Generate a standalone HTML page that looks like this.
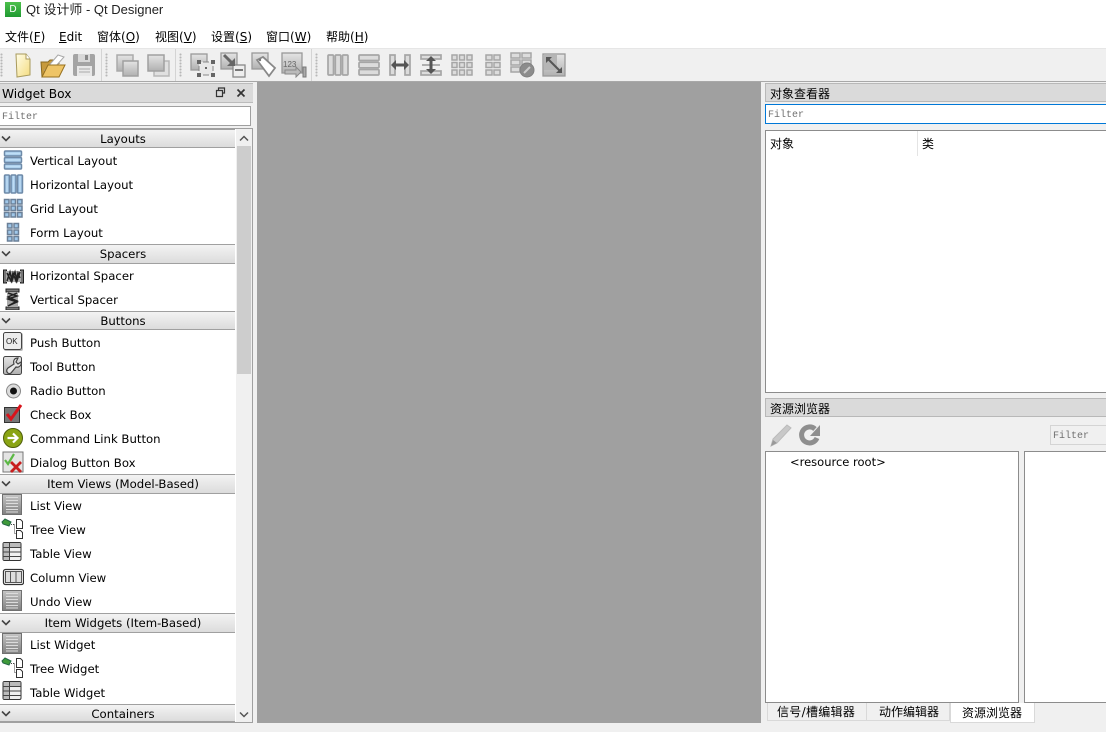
<!DOCTYPE html>
<html><head><meta charset="utf-8"><style>
html,body{margin:0;padding:0}
body{width:1106px;height:732px;overflow:hidden;position:relative;background:#f0f0f0;font-family:"DejaVu Sans","Noto Sans CJK SC",sans-serif;font-size:12px;color:#000}
.a{position:absolute}
.t{position:absolute;white-space:nowrap;line-height:16px}
.m{top:29px}
.hd{position:absolute;left:0;width:235px;background:linear-gradient(#f3f3f3,#dcdcdc);border-top:1px solid #a0a0a0;border-bottom:1px solid #a0a0a0;box-sizing:border-box;font-size:11.700px}
.hd span{position:absolute;left:0;width:246px;text-align:center;top:1px;line-height:17px;white-space:nowrap}
.hd svg{position:absolute;left:1px;top:5px}
.it{position:absolute;left:30px;white-space:nowrap;line-height:16px;font-size:11.700px}
.ic{position:absolute;left:2px;width:22px;height:22px}
.tb{position:absolute;top:52px;width:26px;height:26px}
.grip{position:absolute;top:53px;width:3px;height:24px;background-image:radial-gradient(#b8b8b8 45%,transparent 55%);background-size:3px 3px}
.sep{position:absolute;top:49px;width:1px;height:32px;background:#d4d4d4}
.mono{font-family:"Liberation Mono",monospace;font-size:10px;color:#707070}
</style></head><body>
<svg width="0" height="0" style="position:absolute"><defs>
<linearGradient id="bl" x1="0" y1="0" x2="1" y2="0"><stop offset="0" stop-color="#7ea6d0"/><stop offset=".5" stop-color="#c4e2f8"/><stop offset="1" stop-color="#7ea6d0"/></linearGradient>
<linearGradient id="bv" x1="0" y1="0" x2="0" y2="1"><stop offset="0" stop-color="#8fb9e0"/><stop offset=".5" stop-color="#c4e2f8"/><stop offset="1" stop-color="#8fb9e0"/></linearGradient>
<linearGradient id="gy" x1="0" y1="0" x2="0" y2="1"><stop offset="0" stop-color="#e4e4e4"/><stop offset="1" stop-color="#b0b0b0"/></linearGradient>
<linearGradient id="ls" x1="0" y1="0" x2="0" y2="1"><stop offset="0" stop-color="#c4c4c4"/><stop offset="1" stop-color="#808080"/></linearGradient>
<linearGradient id="doc" x1="0" y1="0" x2="1" y2="1"><stop offset="0" stop-color="#fffde8"/><stop offset="1" stop-color="#f4dc80"/></linearGradient>
<symbol id="chev" viewBox="0 0 10 8"><path d="M1 1.500L5 5.500L9 1.500" fill="none" stroke="#444" stroke-width="1.600"/></symbol>
<symbol id="lv" viewBox="0 0 22 22"><rect x="1.500" y=".5" width="19" height="20" fill="url(#ls)" stroke="#707070"/><path d="M5 3.500h12M5 6.500h12M5 9.500h12M5 12.500h12M5 15.500h12M5 18h12" stroke="#dcdcdc"/></symbol>
<symbol id="tv" viewBox="0 0 22 22"><path d="M1 4l3-3 6 3-2 4-6-2z" fill="#3f9a3a" stroke="#264"/><path d="M10 6.500h4M13.500 6.500v9h2" stroke="#444" stroke-dasharray="1 1" fill="none"/><path d="M15.500 1.500h4l2 2v7h-6zM15.500 12.500h4l2 2v6h-6z" fill="#fff" stroke="#333"/></symbol>
<symbol id="tbl" viewBox="0 0 22 22"><rect x="3" y="1.500" width="18" height="18" rx="1.500" fill="#f0f0f0" stroke="#333"/><rect x="3.500" y="2" width="6" height="17" fill="#bbb"/><rect x="3.500" y="2" width="17" height="4" fill="#bbb"/><path d="M3 6.500h18M3 11h18M3 15.500h18M9.500 1.500v18" stroke="#444"/></symbol>
<symbol id="gbtn" viewBox="0 0 26 26"><rect x="3" y="3" width="16" height="16" fill="url(#gy)" stroke="#aaa" stroke-width="1.500"/><rect x="9" y="9" width="15" height="15" fill="url(#gy)" stroke="#a0a0a0" stroke-width="1.500"/></symbol>
<symbol id="gbtn2" viewBox="0 0 26 26"><rect x="9" y="9" width="15" height="15" fill="#e0e0e0" stroke="#b8b8b8" stroke-width="1.500"/><rect x="3" y="3" width="16" height="16" fill="url(#gy)" stroke="#a0a0a0" stroke-width="1.500"/></symbol>
</defs></svg>

<!-- title + menu -->
<div class="a" style="left:0;top:0;width:1106px;height:48px;background:#fff"></div>
<div class="a" style="left:5px;top:2px;width:16px;height:15px;background:linear-gradient(#4cc04c,#1f9a32);color:#fff;font-size:10px;line-height:15px;text-align:center;font-family:'Liberation Sans',sans-serif">D</div>
<div class="t" style="left:26px;top:2px;font-family:'Liberation Sans','Noto Sans CJK SC',sans-serif;font-size:13px;color:#222">Qt 设计师 - Qt Designer</div>
<div class="t m" style="left:5px">文件(<u>F</u>)</div>
<div class="t m" style="left:59px"><u>E</u>dit</div>
<div class="t m" style="left:97px">窗体(<u>O</u>)</div>
<div class="t m" style="left:155px">视图(<u>V</u>)</div>
<div class="t m" style="left:211px">设置(<u>S</u>)</div>
<div class="t m" style="left:266px">窗口(<u>W</u>)</div>
<div class="t m" style="left:326px">帮助(<u>H</u>)</div>

<!-- toolbar -->
<div class="a" style="left:0;top:48px;width:1106px;height:1px;background:#e6e6e6"></div>
<div class="a" style="left:0;top:81px;width:1106px;height:1px;background:#a8a8a8"></div>
<div class="grip" style="left:0"></div><div class="sep" style="left:101px"></div>
<div class="grip" style="left:105px"></div><div class="sep" style="left:175px"></div>
<div class="grip" style="left:179px"></div><div class="sep" style="left:311px"></div>
<div class="grip" style="left:315px"></div>

<svg class="tb" style="left:10px" viewBox="0 0 26 26"><path d="M6 2h10l4 5v16l-13 2z" fill="url(#doc)" stroke="#a89a5c"/><path d="M16 2v5h4" fill="#fff" stroke="#a89a5c"/></svg>
<svg class="tb" style="left:40px" viewBox="0 0 26 26"><path d="M2 25L1 10h7l2-2h9v4" fill="#c79a3c" stroke="#8a6a20"/><path d="M5 18L18 3l6 2-9 10z" fill="#fff" stroke="#aaa"/><path d="M2 25l6-12h17l-6 12z" fill="#eec466" stroke="#96701f"/></svg>
<svg class="tb" style="left:71px" viewBox="0 0 26 26"><path d="M2 4q0-2 2-2h18q2 0 2 2v18q0 2-2 2H4q-2 0-2-2z" fill="#a4a4a4"/><rect x="7" y="2" width="12" height="8" fill="#d8d8d8"/><rect x="14" y="3" width="3" height="5" fill="#888"/><rect x="6" y="14" width="15" height="10" fill="#e8e8e8"/><path d="M8 17h11M8 20h11" stroke="#aaa"/></svg>

<svg class="tb" style="left:114px"><use href="#gbtn"/></svg>
<svg class="tb" style="left:145px"><use href="#gbtn2"/></svg>

<svg class="tb" style="left:190px" viewBox="0 0 26 26"><rect x="1" y="2" width="16" height="16" fill="url(#gy)" stroke="#999" stroke-width="1.300"/><rect x="9" y="10" width="14" height="13" fill="#e8e8e8"/><path d="M7 8h4v4H7zM21 8h4v4h-4zM7 21h4v4H7zM21 21h4v4h-4zM15 15h2v2h-2z" fill="#666"/><path d="M13 10h6M13 23h6M9 14v5M23 14v5" stroke="#888"/></svg>
<svg class="tb" style="left:220px" viewBox="0 0 26 26"><rect x="1" y="1" width="16" height="16" fill="url(#gy)" stroke="#999" stroke-width="1.300"/><rect x="13" y="13" width="12" height="12" fill="#eee" stroke="#888" stroke-width="1.300"/><path d="M15 18h8" stroke="#777" stroke-width="2"/><path d="M4 3l9 9" stroke="#666" stroke-width="3"/><path d="M15 6v8H7z" fill="#666"/></svg>
<svg class="tb" style="left:251px" viewBox="0 0 26 26"><rect x="1" y="1" width="16" height="16" fill="url(#gy)" stroke="#999" stroke-width="1.300"/><path d="M6 8l6-3 12 11-6 8z" fill="#fff" stroke="#888" stroke-width="1.800"/><circle cx="9" cy="8" r="1.200" fill="#777"/></svg>
<svg class="tb" style="left:281px" viewBox="0 0 26 26"><rect x="1" y="1" width="20" height="20" fill="url(#gy)" stroke="#999" stroke-width="1.300"/><text x="2" y="15" font-family="Liberation Sans" font-size="8" fill="#666">123</text><path d="M4 18h11v-3l5 5-5 5v-3H4z" fill="#bbb" stroke="#888"/><rect x="22" y="15" width="3" height="10" fill="#aaa" stroke="#777"/></svg>

<svg class="tb" style="left:325px" viewBox="0 0 26 26"><g fill="#dcdcdc" stroke="#a6a6a6" stroke-width="1.700"><rect x="3" y="3" width="5.500" height="20" rx="1"/><rect x="10.300" y="3" width="5.500" height="20" rx="1"/><rect x="17.500" y="3" width="5.500" height="20" rx="1"/></g></svg>
<svg class="tb" style="left:356px" viewBox="0 0 26 26"><g fill="#dcdcdc" stroke="#a6a6a6" stroke-width="1.700"><rect x="3" y="3" width="20" height="5.500" rx="1"/><rect x="3" y="10.300" width="20" height="5.500" rx="1"/><rect x="3" y="17.500" width="20" height="5.500" rx="1"/></g></svg>
<svg class="tb" style="left:387px" viewBox="0 0 26 26"><g fill="#dcdcdc" stroke="#a6a6a6" stroke-width="1.700"><rect x="3" y="3" width="5" height="20"/><rect x="18" y="3" width="5" height="20"/></g><path d="M6 13h14" stroke="#555" stroke-width="3"/><path d="M9 8l-5 5 5 5zM17 8l5 5-5 5z" fill="#555"/></svg>
<svg class="tb" style="left:418px" viewBox="0 0 26 26"><g fill="#dcdcdc" stroke="#a6a6a6" stroke-width="1.700"><rect x="3" y="3" width="20" height="4"/><rect x="3" y="19" width="20" height="4"/></g><path d="M4 13h18" stroke="#999" stroke-width="1.500"/><path d="M13 6v14" stroke="#555" stroke-width="3"/><path d="M8 9l5-5 5 5zM8 17l5 5 5-5z" fill="#555"/></svg>
<svg class="tb" style="left:449px" viewBox="0 0 26 26"><g fill="#dcdcdc" stroke="#a6a6a6" stroke-width="1.500"><rect x="3" y="3" width="5" height="5"/><rect x="10.500" y="3" width="5" height="5"/><rect x="18" y="3" width="5" height="5"/><rect x="3" y="10.500" width="5" height="5"/><rect x="10.500" y="10.500" width="5" height="5"/><rect x="18" y="10.500" width="5" height="5"/><rect x="3" y="18" width="5" height="5"/><rect x="10.500" y="18" width="5" height="5"/><rect x="18" y="18" width="5" height="5"/></g></svg>
<svg class="tb" style="left:480px" viewBox="0 0 26 26"><g fill="#dcdcdc" stroke="#a6a6a6" stroke-width="1.500"><rect x="6" y="3" width="6" height="5"/><rect x="14" y="3" width="6" height="5"/><rect x="6" y="10.500" width="6" height="5"/><rect x="14" y="10.500" width="6" height="5"/><rect x="6" y="18" width="6" height="5"/><rect x="14" y="18" width="6" height="5"/></g></svg>
<svg class="tb" style="left:510px" viewBox="0 0 26 26"><g fill="#dcdcdc" stroke="#a6a6a6" stroke-width="1.500"><rect x="1" y="1" width="9" height="5"/><rect x="12" y="1" width="9" height="5"/><rect x="1" y="8" width="9" height="5"/><rect x="12" y="8" width="9" height="5"/><rect x="1" y="15" width="9" height="5"/></g><circle cx="17" cy="18" r="7" fill="#8c8c8c" stroke="#808080"/><path d="M14 21l6-6" stroke="#ccc" stroke-width="2"/></svg>
<svg class="tb" style="left:541px" viewBox="0 0 26 26"><rect x="2" y="2" width="22" height="22" fill="url(#gy)" stroke="#999" stroke-width="1.300"/><path d="M3 3h13v15H3z" fill="#b5b5b5"/><path d="M6 6l14 14" stroke="#555" stroke-width="2"/><path d="M5 11V5h6zM21 15v6h-6z" fill="#555"/></svg>

<!-- widget box -->
<div class="a" style="left:0;top:83px;width:253px;height:20px;background:#dadada;border-top:1px solid #bbb;border-bottom:1px solid #bbb;box-sizing:border-box"></div>
<div class="t" style="left:2px;top:86px;font-size:12.200px">Widget Box</div>
<svg class="a" style="left:215px;top:87px" width="11" height="11" viewBox="0 0 11 11"><path d="M3.500 3V1h6v5H7.500M1.500 3.500h6v6h-6z" fill="none" stroke="#333" stroke-width="1.200"/></svg>
<svg class="a" style="left:236px;top:88px" width="10" height="10" viewBox="0 0 10 10"><path d="M1.500 1.500l7 7M8.500 1.500l-7 7" stroke="#333" stroke-width="1.700"/></svg>
<div class="a" style="left:-2px;top:106px;width:253px;height:20px;background:#fff;border:1px solid #a0a0a0;box-sizing:border-box"></div>
<div class="t mono" style="left:2px;top:110px">Filter</div>
<div class="a" style="left:0;top:128px;width:253px;height:595px;background:#fff;border-top:1px solid #a0a0a0;border-right:1px solid #a0a0a0;border-bottom:1px solid #a0a0a0;box-sizing:border-box"></div>
<div class="a" style="left:236px;top:129px;width:16px;height:593px;background:#f0f0f0"></div>
<div class="a" style="left:237px;top:146px;width:14px;height:228px;background:#cdcdcd"></div>
<svg class="a" style="left:239px;top:135px" width="10" height="7" viewBox="0 0 10 7"><path d="M1 5.500L5 1.500L9 5.500" fill="none" stroke="#555" stroke-width="1.500"/></svg>
<svg class="a" style="left:239px;top:711px" width="10" height="7" viewBox="0 0 10 7"><path d="M1 1.500L5 5.500L9 1.500" fill="none" stroke="#555" stroke-width="1.500"/></svg>

<div class="hd" style="top:129px;height:19px"><svg width="10" height="8"><use href="#chev"/></svg><span>Layouts</span></div>
<div class="hd" style="top:244px;height:20px"><svg width="10" height="8"><use href="#chev"/></svg><span>Spacers</span></div>
<div class="hd" style="top:311px;height:19px"><svg width="10" height="8"><use href="#chev"/></svg><span>Buttons</span></div>
<div class="hd" style="top:474px;height:20px"><svg width="10" height="8"><use href="#chev"/></svg><span>Item Views (Model-Based)</span></div>
<div class="hd" style="top:613px;height:20px"><svg width="10" height="8"><use href="#chev"/></svg><span>Item Widgets (Item-Based)</span></div>
<div class="hd" style="top:704px;height:18px"><svg width="10" height="8"><use href="#chev"/></svg><span>Containers</span></div>

<div class="it" style="top:153px">Vertical Layout</div>
<div class="it" style="top:177px">Horizontal Layout</div>
<div class="it" style="top:201px">Grid Layout</div>
<div class="it" style="top:225px">Form Layout</div>
<div class="it" style="top:268px">Horizontal Spacer</div>
<div class="it" style="top:292px">Vertical Spacer</div>
<div class="it" style="top:335px">Push Button</div>
<div class="it" style="top:359px">Tool Button</div>
<div class="it" style="top:383px">Radio Button</div>
<div class="it" style="top:407px">Check Box</div>
<div class="it" style="top:431px">Command Link Button</div>
<div class="it" style="top:455px">Dialog Button Box</div>
<div class="it" style="top:498px">List View</div>
<div class="it" style="top:522px">Tree View</div>
<div class="it" style="top:546px">Table View</div>
<div class="it" style="top:570px">Column View</div>
<div class="it" style="top:594px">Undo View</div>
<div class="it" style="top:637px">List Widget</div>
<div class="it" style="top:661px">Tree Widget</div>
<div class="it" style="top:685px">Table Widget</div>

<svg class="ic" style="top:149px" viewBox="0 0 22 22"><g fill="url(#bv)" stroke="#6e8aa8" stroke-width="1.500"><rect x="2.500" y="2" width="17" height="5" rx="1"/><rect x="2.500" y="8.500" width="17" height="5" rx="1"/><rect x="2.500" y="15" width="17" height="5" rx="1"/></g></svg>
<svg class="ic" style="top:173px" viewBox="0 0 22 22"><g fill="url(#bl)" stroke="#6e8aa8" stroke-width="1.500"><rect x="2.500" y="2" width="5" height="18" rx="1"/><rect x="9" y="2" width="5" height="18" rx="1"/><rect x="15.500" y="2" width="5" height="18" rx="1"/></g></svg>
<svg class="ic" style="top:197px" viewBox="0 0 22 22"><g fill="#a0c8ea" stroke="#6b8098" stroke-width="1.500"><rect x="2.500" y="2.500" width="4.500" height="4.500"/><rect x="9" y="2.500" width="4.500" height="4.500"/><rect x="15.500" y="2.500" width="4.500" height="4.500"/><rect x="2.500" y="9" width="4.500" height="4.500"/><rect x="9" y="9" width="4.500" height="4.500"/><rect x="15.500" y="9" width="4.500" height="4.500"/><rect x="2.500" y="15.500" width="4.500" height="4.500"/><rect x="9" y="15.500" width="4.500" height="4.500"/><rect x="15.500" y="15.500" width="4.500" height="4.500"/></g></svg>
<svg class="ic" style="top:221px" viewBox="0 0 22 22"><g fill="#a0c8ea" stroke="#6b8098" stroke-width="1.500"><rect x="5.500" y="2.500" width="4.500" height="4.500"/><rect x="12" y="2.500" width="4.500" height="4.500"/><rect x="5.500" y="9" width="4.500" height="4.500"/><rect x="12" y="9" width="4.500" height="4.500"/><rect x="5.500" y="15.500" width="4.500" height="4.500"/><rect x="12" y="15.500" width="4.500" height="4.500"/></g></svg>
<svg class="ic" style="top:265px" viewBox="0 0 22 22"><rect x="1.500" y="5" width="3" height="13" fill="#777" stroke="#222"/><rect x="18.500" y="5" width="3" height="13" fill="#777" stroke="#222"/><rect x="4" y="6" width="15" height="11" fill="#aaa"/><path d="M5 16l3-9 2 9 3-9 2 9 3-9M5 8l4 8 2-8 3 8 2-8 2 5" fill="none" stroke="#222" stroke-width="1.500"/></svg>
<svg class="ic" style="top:288px" viewBox="0 0 22 22"><rect x="4" y="1" width="13" height="3" fill="#777" stroke="#222"/><rect x="4" y="19" width="13" height="3" fill="#777" stroke="#222"/><rect x="5" y="4" width="11" height="15" fill="#aaa"/><path d="M6 5l9 3-9 3 9 3-9 4M15 5l-9 4 9 4-9 5" fill="none" stroke="#222" stroke-width="1.500"/></svg>
<svg class="ic" style="top:331px" viewBox="0 0 22 22"><rect x="2" y="2" width="19" height="18" rx="2" fill="#bbb"/><rect x="1.500" y="1.500" width="18" height="17" rx="2" fill="#ececec" stroke="#444"/><text x="4" y="13" font-family="Liberation Sans" font-size="8" fill="#222">OK</text></svg>
<svg class="ic" style="top:355px" viewBox="0 0 22 22"><rect x="1.500" y="1.500" width="18" height="18" rx="2" fill="url(#gy)" stroke="#444"/><path d="M16 3c-4 0-5 3-4 6l-6 4c-3 3 0 7 3 5l5-6c3 1 6-2 5-5l-3 2-2-2z" fill="#e8e8e8" stroke="#444" stroke-width="1.200"/></svg>
<svg class="ic" style="top:380px" viewBox="0 0 22 22"><circle cx="11.500" cy="11" r="7" fill="#dcdcdc" stroke="#888"/><circle cx="11.500" cy="11" r="3.500" fill="#111"/></svg>
<svg class="ic" style="top:403px" viewBox="0 0 22 22"><rect x="2.500" y="4.500" width="15" height="15" fill="#777" stroke="#333"/><path d="M5 11l4 5L19 2" fill="none" stroke="#d8141c" stroke-width="3"/></svg>
<svg class="ic" style="top:427px" viewBox="0 0 22 22"><circle cx="11" cy="11" r="9.500" fill="#8aa414" stroke="#4e5e0a"/><path d="M5.500 11h9M11 6.500l4.500 4.500-4.500 4.500" fill="none" stroke="#fff" stroke-width="2.200"/></svg>
<svg class="ic" style="top:451px" viewBox="0 0 22 22"><rect x="1" y="1" width="20" height="20" fill="#e4e4e4" stroke="#777"/><path d="M3 9l3 4 6-10" fill="none" stroke="#5cb845" stroke-width="2.200"/><path d="M9 11l10 10M19 11L9 21" stroke="#c81e1e" stroke-width="2.800"/></svg>
<svg class="ic" style="top:494px;left:1px"><use href="#lv"/></svg>
<svg class="ic" style="top:518px;left:1px"><use href="#tv"/></svg>
<svg class="ic" style="top:541px;left:0"><use href="#tbl"/></svg>
<svg class="ic" style="top:566px;left:2px" viewBox="0 0 22 22"><rect x="1.500" y="3.500" width="20" height="15" rx="2" fill="#fff" stroke="#333" stroke-width="1.300"/><rect x="3.500" y="5.500" width="16" height="11" fill="#ddd" stroke="#555"/><path d="M8.500 5.500v11M14 5.500v11" stroke="#555"/></svg>
<svg class="ic" style="top:590px;left:1px"><use href="#lv"/></svg>
<svg class="ic" style="top:633px;left:1px"><use href="#lv"/></svg>
<svg class="ic" style="top:657px;left:1px"><use href="#tv"/></svg>
<svg class="ic" style="top:680px;left:0"><use href="#tbl"/></svg>

<!-- central -->
<div class="a" style="left:257px;top:82px;width:504px;height:641px;background:#a0a0a0"></div>

<!-- object inspector -->
<div class="a" style="left:765px;top:83px;width:341px;height:19px;background:#dadada;border:1px solid #b8b8b8;border-right:0;box-sizing:border-box"></div>
<div class="t" style="left:770px;top:86px">对象查看器</div>
<div class="a" style="left:765px;top:104px;width:341px;height:20px;background:#fff;border:1px solid #0078d7;border-right:0;box-sizing:border-box"></div>
<div class="t mono" style="left:768px;top:108px">Filter</div>
<div class="a" style="left:765px;top:130px;width:341px;height:263px;background:#fff;border:1px solid #8c8c8c;border-right:0;box-sizing:border-box"></div>
<div class="t" style="left:770px;top:136px">对象</div>
<div class="a" style="left:917px;top:131px;width:1px;height:25px;background:#e4e4e4"></div>
<div class="t" style="left:922px;top:136px">类</div>

<!-- resource browser -->
<div class="a" style="left:765px;top:398px;width:341px;height:19px;background:#dadada;border:1px solid #b8b8b8;border-right:0;box-sizing:border-box"></div>
<div class="t" style="left:770px;top:401px">资源浏览器</div>
<svg class="a" style="left:769px;top:423px" width="24" height="24" viewBox="0 0 24 24"><path d="M2 23l2-7L18 2l4 3L8 20z" fill="#c8c8c8" stroke="#bbb"/><path d="M2 23l2-6 4 3z" fill="#999"/></svg>
<svg class="a" style="left:798px;top:423px" width="24" height="24" viewBox="0 0 24 24"><path d="M19 15a8 8 0 1 1-2-9" fill="none" stroke="#8e8e8e" stroke-width="5"/><path d="M22 2v11h-10z" fill="#8e8e8e"/></svg>
<div class="a" style="left:1050px;top:425px;width:56px;height:20px;background:#f0f0f0;border:1px solid #d4d4d4;border-right:0;box-sizing:border-box"></div>
<div class="t mono" style="left:1053px;top:429px">Filter</div>
<div class="a" style="left:765px;top:451px;width:254px;height:252px;background:#fff;border:1px solid #8c8c8c;box-sizing:border-box"></div>
<div class="t" style="left:790px;top:454px;font-size:11.500px">&lt;resource root&gt;</div>
<div class="a" style="left:1024px;top:451px;width:82px;height:252px;background:#fff;border:1px solid #8c8c8c;border-right:0;box-sizing:border-box"></div>

<!-- tabs -->
<div class="a" style="left:767px;top:703px;width:100px;height:18px;background:#f0f0f0;border:1px solid #d9d9d9;border-top:0;box-sizing:border-box"></div>
<div class="a" style="left:867px;top:703px;width:83px;height:18px;background:#f0f0f0;border:1px solid #d9d9d9;border-top:0;border-left:0;box-sizing:border-box"></div>
<div class="a" style="left:950px;top:703px;width:85px;height:20px;background:#fff;border:1px solid #d9d9d9;border-top:0;box-sizing:border-box"></div>
<div class="t" style="left:777px;top:704px;letter-spacing:.3px">信号/槽编辑器</div>
<div class="t" style="left:879px;top:704px">动作编辑器</div>
<div class="t" style="left:962px;top:705px">资源浏览器</div>
</body></html>
